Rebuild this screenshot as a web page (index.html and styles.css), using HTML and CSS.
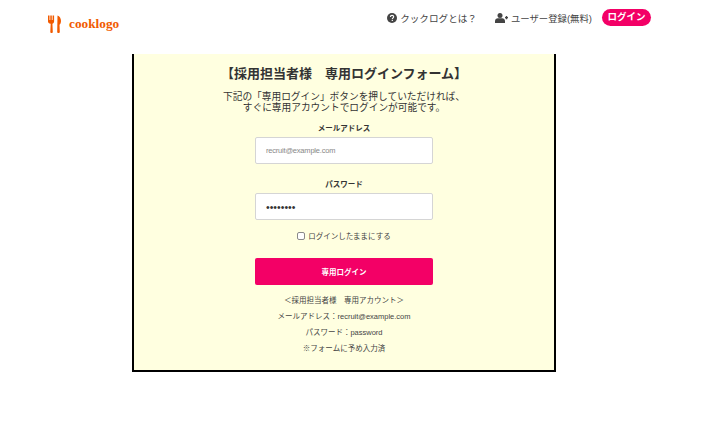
FILE: index.html
```html
<!DOCTYPE html>
<html lang="ja">
<head>
    <meta charset="UTF-8">
    <title>cooklogo</title>
    <link rel="stylesheet" href="styles.css">
</head>
<body>
    <header class="site-header">
        <a class="logo" href="#">
            <svg class="logo-icon" width="13" height="18" viewBox="0 0 13 18">
                <path d="M0 0.5h1.500v4.500h0.800v-4.500h1.500v4.500h0.800v-4.500h1.500v6c0 1.300-.9 2-1.700 2.300l.4 8.200c0 1.300-2.500 1.300-2.500 0l.4-8.200C.9 8.500 0 7.800 0 6.500z" fill="#f15a00"/>
                <path d="M9.500 0.500c2.200 .5 3.500 3 3.500 5.500 0 2-.8 3.300-1.500 3.800l.3 7.200c0 1.300-2.600 1.300-2.600 0z" fill="#f15a00"/>
            </svg>
            <span class="logo-text">cooklogo</span>
        </a>
        <nav class="nav">
            <a class="nav-link" href="#">
                <svg class="nav-icon" width="10" height="10" viewBox="0 0 10 10">
                    <circle cx="5" cy="5" r="5" fill="#444"/>
                    <path d="M3.400 3.900c0-2 3.300-2 3.300-.1 0 1.200-1.400 1.100-1.400 2.200" fill="none" stroke="#fff" stroke-width="1.100"/>
                    <rect x="4.700" y="6.800" width="1.200" height="1.200" fill="#fff"/>
                </svg>
                クックログとは？
            </a>
            <a class="nav-link nav-link-signup" href="#">
                <svg class="nav-icon" width="13" height="10" viewBox="0 0 13 10">
                    <circle cx="5" cy="2.500" r="2.500" fill="#444"/>
                    <path d="M0 10V8c0-1.700 1.300-2.800 2.800-2.800h4.400C8.700 5.200 10 6.300 10 8v2z" fill="#444"/>
                    <path d="M10 4h3v1.300h-3zM10.800 3h1.400v3.300h-1.400z" fill="#444"/>
                </svg>
                ユーザー登録(無料)
            </a>
            <a class="login-pill" href="#">ログイン</a>
        </nav>
    </header>

    <main class="card">
        <h1 class="card-title">【採用担当者様　専用ログインフォーム】</h1>
        <p class="card-lead">下記の「専用ログイン」ボタンを押していただければ、<br>すぐに専用アカウントでログインが可能です。</p>
        <form class="login-form">
            <label class="field-label" for="email">メールアドレス</label>
            <input class="field-input field-input-email" id="email" type="email" placeholder="recruit@example.com">
            <label class="field-label" for="password">パスワード</label>
            <input class="field-input field-input-password" id="password" type="password" value="password">
            <label class="remember"><input class="remember-box" type="checkbox"> ログインしたままにする</label>
            <button class="submit-btn" type="button">専用ログイン</button>
        </form>
        <div class="account-note">
            <p>＜採用担当者様　専用アカウント＞</p>
            <p>メールアドレス：recruit@example.com</p>
            <p>パスワード：password</p>
            <p>※フォームに予め入力済</p>
        </div>
    </main>
</body>
</html>
```

FILE: styles.css
```css
* {
    box-sizing: border-box;
}

body {
    margin: 0;
    background-color: #ffffff;
    color: #333333;
    font-family: "Liberation Sans", "Noto Sans CJK JP", sans-serif;
}

a {
    color: inherit;
    text-decoration: none;
}

/* Header */
.site-header {
    display: flex;
    align-items: center;
    justify-content: space-between;
    height: 54px;
    padding: 0 69px 19px 48px;
}

.logo {
    display: flex;
    align-items: center;
    gap: 8px;
    padding-top: 13px;
}

.logo-icon {
    display: block;
}

.logo-text {
    color: #f15a00;
    font-family: "Liberation Serif", serif;
    font-size: 13.300px;
    font-weight: 700;
}

.nav {
    display: flex;
    align-items: center;
}

.nav-link {
    display: flex;
    align-items: center;
    gap: 3px;
    color: #444444;
    font-size: 9.600px;
}

.nav-link-signup {
    margin-left: 18px;
    font-size: 9.400px;
}

.nav-icon {
    display: block;
}

.login-pill {
    margin-left: 10px;
    padding: 0 5.500px;
    height: 17px;
    line-height: 16px;
    border-radius: 9px;
    background-color: #f30066;
    color: #ffffff;
    font-size: 9.500px;
    font-weight: 700;
}

/* Card */
.card {
    width: 424px;
    height: 318px;
    margin-left: 132px;
    padding-top: 12px;
    border: 2px solid #000000;
    border-top: none;
    background-color: #ffffe0;
    box-shadow: 0 1px 0 #d8d8d8;
    text-align: center;
}

.card-title {
    margin: 0;
    font-size: 13px;
    line-height: 16px;
}

.card-lead {
    margin: 9px 0 0;
    font-size: 9.700px;
    line-height: 11px;
}

.login-form {
    display: flex;
    flex-direction: column;
    align-items: center;
    margin-top: 11px;
}

.field-label {
    font-size: 7.500px;
    font-weight: 700;
    line-height: 10px;
}

.field-input {
    width: 178px;
    height: 27px;
    margin: 3px 0 16px;
    padding: 0 10px;
    border: 1px solid #d5d5d5;
    border-radius: 2px;
    background-color: #ffffff;
    color: #333333;
    font-family: "Liberation Sans", sans-serif;
    font-size: 7.500px;
    letter-spacing: -0.2px;
}

.field-input::placeholder {
    color: #888888;
}

.field-input-password {
    margin-bottom: 10px;
    font-size: 10.500px;
    letter-spacing: 0;
}

.remember {
    display: flex;
    align-items: center;
    gap: 3px;
    color: #444444;
    font-size: 7.500px;
}

.remember-box {
    appearance: none;
    width: 8px;
    height: 8px;
    margin: 0;
    border: 1px solid #8a8a8a;
    border-radius: 2px;
    background-color: #ffffff;
}

.submit-btn {
    width: 178px;
    height: 27px;
    margin-top: 17px;
    border: none;
    border-radius: 2px;
    background-color: #f30066;
    color: #ffffff;
    font-family: inherit;
    font-size: 7.500px;
    font-weight: 700;
}

.account-note {
    margin-top: 8px;
    color: #444444;
    font-size: 7.500px;
}

.account-note p {
    margin: 0;
    line-height: 16px;
}
```
